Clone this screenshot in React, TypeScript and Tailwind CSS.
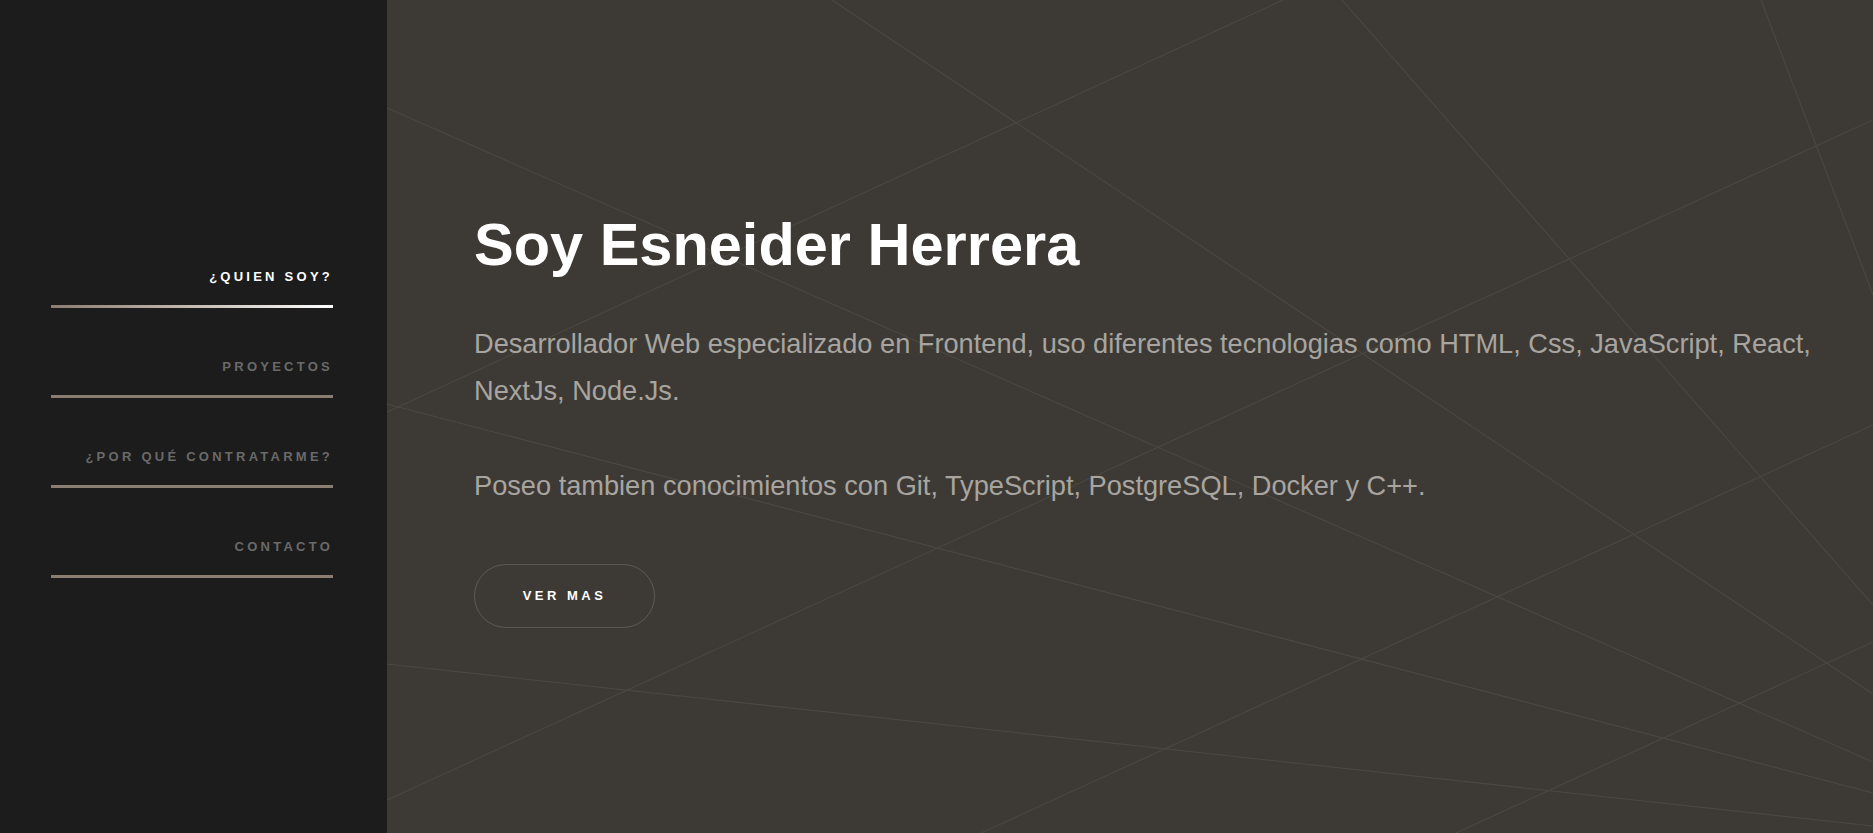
import React from "react";

const FONT = { fontFamily: '"Liberation Sans", Arial, Helvetica, sans-serif' };

const navItems = [
  { label: "¿QUIEN SOY?", active: true },
  { label: "PROYECTOS", active: false },
  { label: "¿POR QUÉ CONTRATARME?", active: false },
  { label: "CONTACTO", active: false },
];

// background lines, coordinates relative to the 1486x833 main panel
const lines: [number, number, number, number][] = [
  [0, 108, 1486, 762],
  [0, 412, 896, 0],
  [0, 404, 1486, 793],
  [0, 664, 1486, 826],
  [0, 800, 1486, 120],
  [594, 833, 1486, 425],
  [1069, 833, 1486, 642],
  [445, 0, 1486, 694],
  [955, 0, 1486, 605],
  [1374, 0, 1486, 295],
];

export default function App() {
  return (
    <div className="flex h-[833px] w-full overflow-hidden" style={FONT}>
      <aside className="flex w-[387px] shrink-0 flex-col bg-[#1c1c1c] pl-[51px] pr-[54px] pt-[269px]">
        <nav className="flex flex-col gap-[51px]">
          {navItems.map((item) => (
            <a key={item.label} href="#" className="flex flex-col">
              <span
                className={`block h-[16px] text-right text-[13px] font-bold leading-[16px] tracking-[3.25px] ${
                  item.active ? "text-white" : "text-[#6a6a6a]"
                }`}
              >
                {item.label}
              </span>
              <span
                className={`mt-[20px] block h-[3px] w-full ${
                  item.active ? "bg-linear-to-r from-[#8b7d6f] to-white" : "bg-[#8b7d6f]"
                }`}
              />
            </a>
          ))}
        </nav>
      </aside>

      <main className="relative flex-1 bg-[#3d3a35]">
        <svg
          className="pointer-events-none absolute inset-0 h-full w-full"
          viewBox="0 0 1486 833"
          preserveAspectRatio="none"
        >
          {lines.map(([x1, y1, x2, y2], i) => (
            <line key={i} x1={x1} y1={y1} x2={x2} y2={y2} stroke="#4b4741" strokeWidth={1.1} />
          ))}
        </svg>

        <div className="relative flex flex-col items-start pl-[87px] pr-[40px] pt-[215px]">
          <h1 className="text-[59.5px] font-bold leading-[60px] text-white">Soy Esneider Herrera</h1>
          <p className="mt-[45px] text-[27.2px] leading-[47px] text-[#a8a5a0]">
            Desarrollador Web especializado en Frontend, uso diferentes tecnologias como HTML, Css, JavaScript, React,
            NextJs, Node.Js.
          </p>
          <p className="mt-[48px] text-[27.2px] leading-[47px] text-[#a8a5a0]">
            Poseo tambien conocimientos con Git, TypeScript, PostgreSQL, Docker y C++.
          </p>
          <button className="mt-[55px] flex h-[64px] w-[181px] items-center justify-center rounded-full border border-[#5e5952] text-[13px] font-bold tracking-[3.5px] text-white">
            VER MAS
          </button>
        </div>
      </main>
    </div>
  );
}
